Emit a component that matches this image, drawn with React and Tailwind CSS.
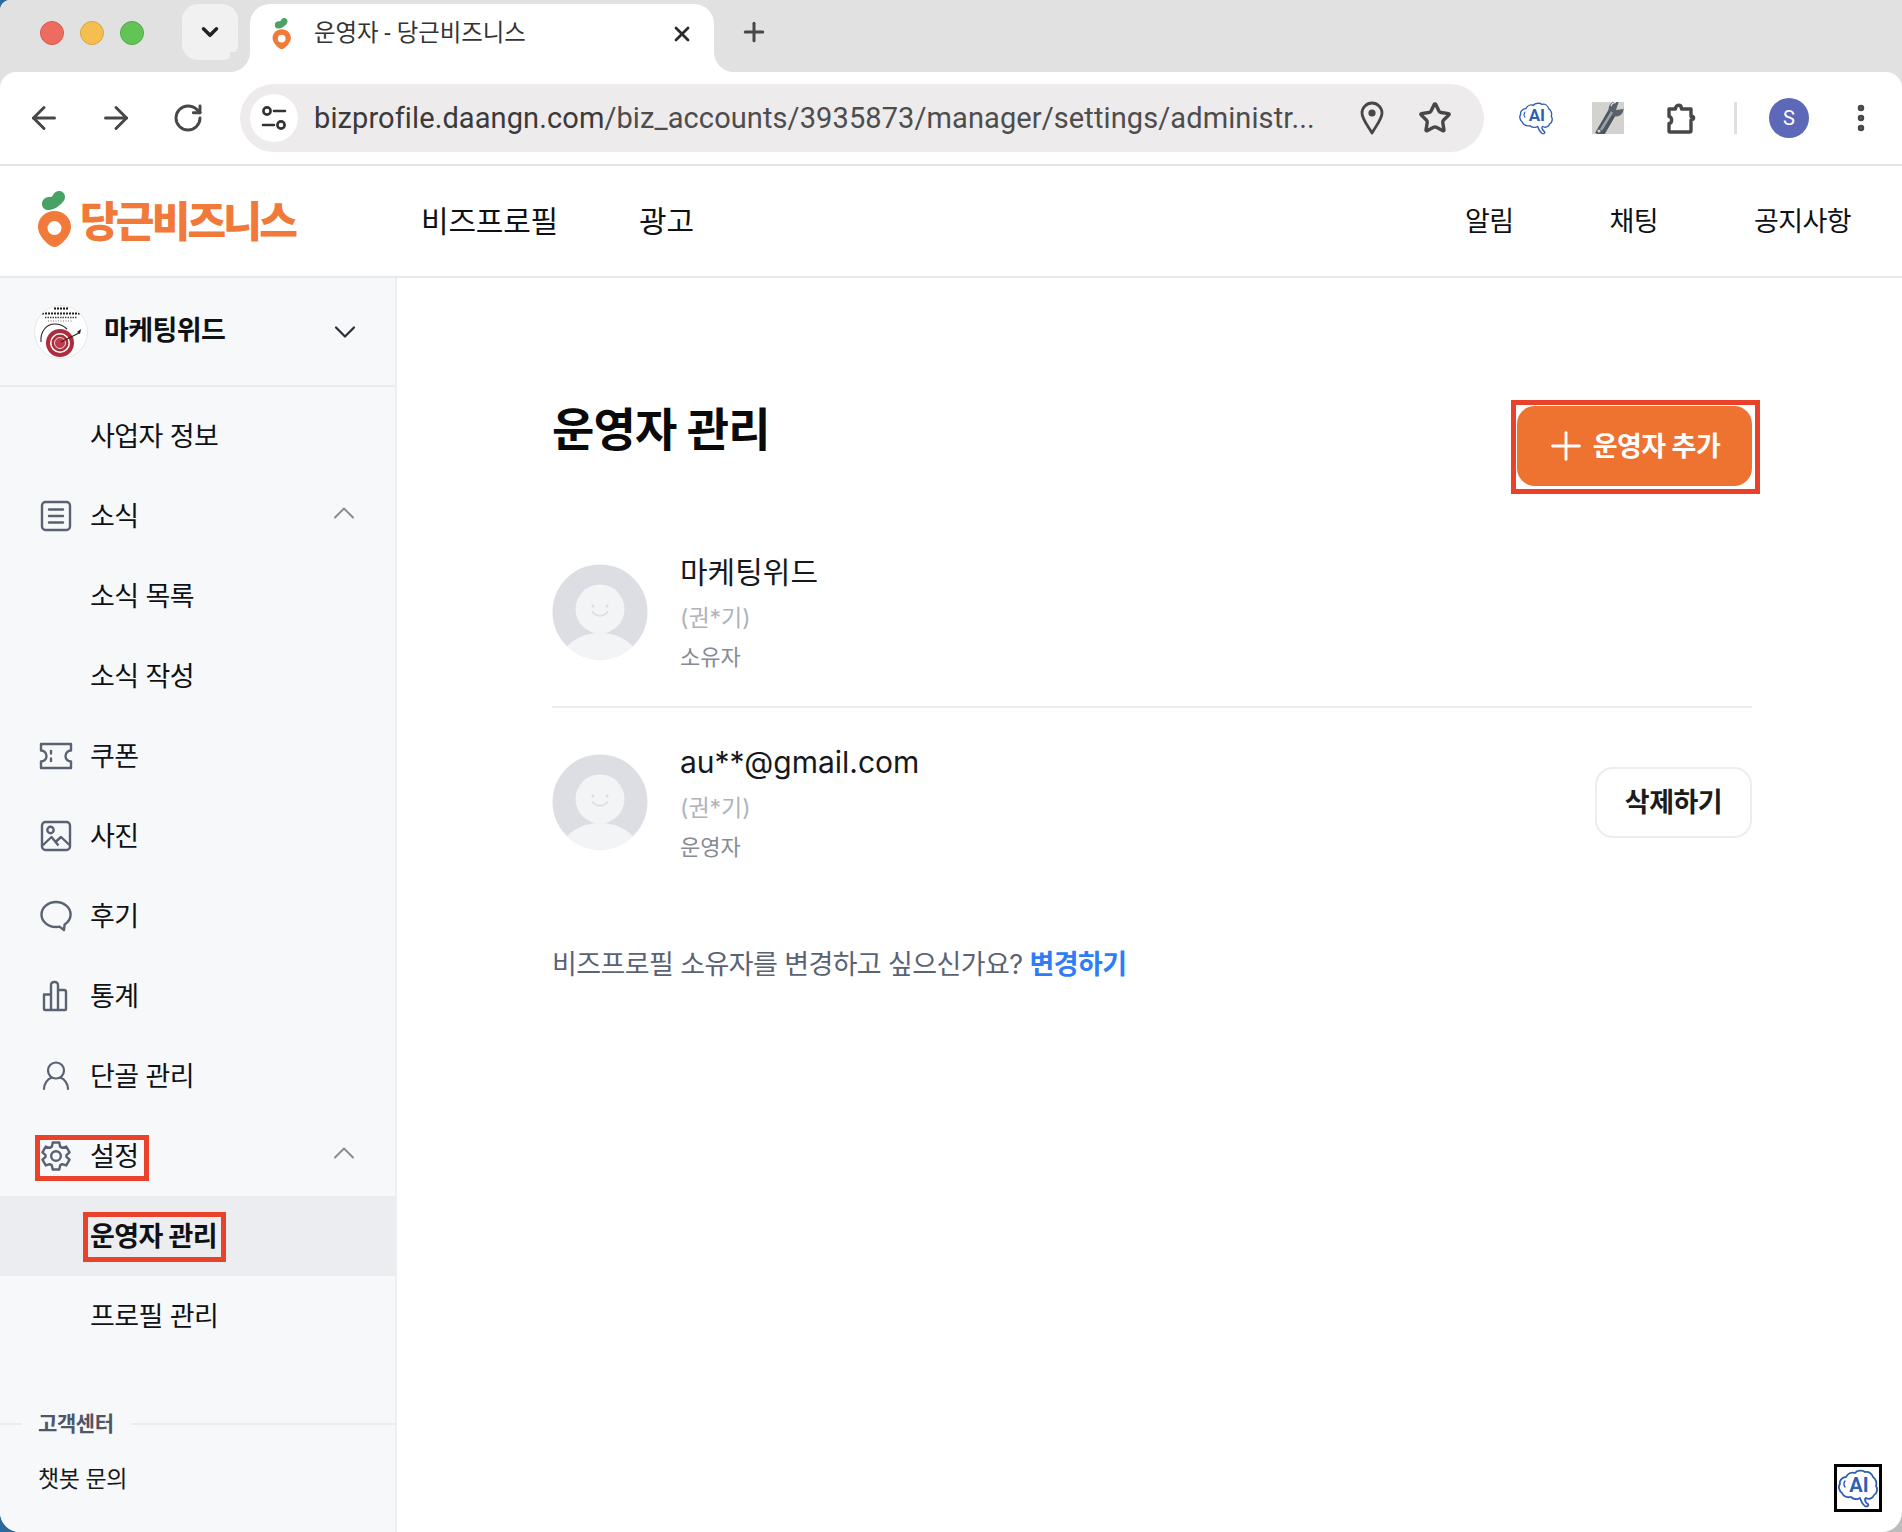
import React from "react";
import { ArrowLeft, ArrowRight, RotateCw, Star, X, Plus, ChevronDown, ChevronUp, EllipsisVertical } from "lucide-react";

const slate = "#596172";

function IconNews() {
  return (
    <svg width="32" height="32" viewBox="0 0 32 32" fill="none" stroke={slate} strokeWidth="2.4" strokeLinecap="round">
      <rect x="2" y="2" width="28" height="28" rx="3.5" />
      <path d="M9 9.5h14M9 16h14M9 22.5h14" />
    </svg>
  );
}

function IconCoupon() {
  return (
    <svg width="34" height="28" viewBox="0 0 34 28" fill="none" stroke={slate} strokeWidth="2.4">
      <path d="M2 2h30v6.5a5.5 5.5 0 0 0 0 11V26H2v-6.5a5.5 5.5 0 0 0 0-11V2Z" strokeLinejoin="round" />
      <path d="M12 9v2.5M12 16.5V19" strokeLinecap="round" />
    </svg>
  );
}

function IconPhoto() {
  return (
    <svg width="32" height="32" viewBox="0 0 32 32" fill="none" stroke={slate} strokeWidth="2.4" strokeLinejoin="round">
      <rect x="2" y="2" width="28" height="28" rx="3.5" />
      <circle cx="10.5" cy="10" r="3.2" />
      <path d="M2.5 25.5 11.5 17l7 8.5M16 21.5l5-4.5 8.5 8" />
    </svg>
  );
}

function IconChat() {
  return (
    <svg width="32" height="32" viewBox="0 0 32 32" fill="none" stroke={slate} strokeWidth="2.4" strokeLinejoin="round">
      <path d="M16 2C8 2 1.5 7.5 1.5 14.5S8 27 16 27c1.700 0 2.500-.1 3.500-.4L24 30l.6-5.500c3.600-2.400 6-6 6-10C30.600 7.500 24 2 16 2Z" />
    </svg>
  );
}

function IconBars() {
  return (
    <svg width="32" height="32" viewBox="0 0 32 32" fill="none" stroke={slate} strokeWidth="2.4" strokeLinejoin="round">
      <path d="M4 14.500h7V30H5a1 1 0 0 1-1-1V14.500ZM11 30V5a3 3 0 0 1 3-3h1a3 3 0 0 1 3 3v25H11ZM18 10h6a2 2 0 0 1 2 2v17a1 1 0 0 1-1 1h-7V10Z" />
    </svg>
  );
}

function IconPerson() {
  return (
    <svg width="32" height="32" viewBox="0 0 32 32" fill="none" stroke={slate} strokeWidth="2.200" strokeLinecap="round">
      <circle cx="16" cy="10.500" r="8" />
      <path d="M4 29c0-5.500 3.500-10 7.500-11.200M28 29c0-5.500-3.500-10-7.500-11.200" />
    </svg>
  );
}

function IconGear() {
  return (
    <svg width="34" height="34" viewBox="0 0 24 24" fill="none" stroke={slate} strokeWidth="1.700" strokeLinejoin="round">
      <path d="M9.670 2.500h4.660l.6 2.900 1.500.87 2.800-.93 2.330 4.030-2.200 1.970v1.320l2.200 1.970-2.330 4.030-2.800-.93-1.500.87-.6 2.900H9.670l-.6-2.900-1.500-.87-2.800.93-2.330-4.030 2.200-1.970v-1.320l-2.200-1.970 2.330-4.030 2.800.93 1.500-.87.6-2.900Z" />
      <circle cx="12" cy="12" r="3.400" />
    </svg>
  );
}

function Carrot({ size = 36 }) {
  return (
    <svg width={size} height={size * 1.56} viewBox="0 0 36 56" aria-hidden="true">
      <path d="M5 13c0-4 3-7 7-7 2 0 3 0 4-2 1.500-2.500 3.500-4 6-4 3.500 0 6 2.500 6 6 0 2-1 4-3 6-3 3-8 7-13 7-4 0-7-2-7-6Z" fill="#48a266" />
      <path fillRule="evenodd" d="M17.500 20C27 20 34 27 34 36c0 8-8 16-13 19-2 1.300-5 1.300-7 0C9 52 1 44 1 36c0-9 7-16 16.500-16Zm0 10a7 7 0 1 0 0 14 7 7 0 0 0 0-14Z" fill="#f1793a" />
    </svg>
  );
}

function BrainAI({ size = 36, stroke = 2 }) {
  return (
    <svg width={size} height={size} viewBox="0 0 40 40" fill="none" aria-hidden="true">
      <path
        d="M8 9C10 5 14 4 17 5C19 2 25 2 27 4C31 3 34 6 35 9C38 11 39 15 38 18C40 21 39 26 36 27C35 30 31 32 28 30L27 31C27 33 28 35 30 36C31 38 29 39 27 38C24 36 23 33 22 30C19 32 15 31 13 29C9 30 5 28 4 25C1 23 0 18 2 16C1 13 4 9 8 9Z"
        stroke="#2f5fb0"
        strokeWidth={stroke}
        strokeLinejoin="round"
      />
      <path d="M7 13c-1.500 2-1.500 4 0 6" stroke="#2f5fb0" strokeWidth={stroke * 0.8} strokeLinecap="round" />
      <text x="21" y="24" textAnchor="middle" fontSize="20" fontWeight="700" fill="#2f5fb0" fontFamily="Roboto, sans-serif">AI</text>
    </svg>
  );
}

function Wrench() {
  return (
    <div className="w-[32px] h-[32px] bg-[#d2d3ce] overflow-hidden">
      <svg width="32" height="32" viewBox="0 0 32 32" aria-hidden="true">
        <path d="M7 33 21 9" stroke="#4f5661" strokeWidth="9" />
        <circle cx="24" cy="7" r="7.500" fill="#5a616c" />
        <path d="M24 8 27 -1 33 2 31 7Z" fill="#d2d3ce" />
        <path d="M9 28 20 10" stroke="#9aa0a8" strokeWidth="2.500" />
        <path d="M19 4c1-2.500 3-3.500 5-3.500" stroke="#eeeeec" strokeWidth="1.200" fill="none" />
        <circle cx="7" cy="29" r="1.600" fill="#d2d3ce" />
      </svg>
    </div>
  );
}

function Puzzle() {
  return (
    <svg width="30" height="32" viewBox="0 0 30 32" fill="none" stroke="#474747" strokeWidth="3.400" strokeLinejoin="round" aria-hidden="true">
      <path d="M3 7h6.500c0-5 6-5 6 0H25v7.500c3-1.200 4 3 0 3.500v10.500c0 1-.5 1.500-1.500 1.500H4c-.7 0-1-.5-1-1.200V21.500c3.500 0 3.500-7 0-7V7Z" />
    </svg>
  );
}

function SiteAvatar() {
  return (
    <div className="w-[54px] h-[54px] rounded-full bg-white border border-[#e6e7ea] overflow-hidden shrink-0">
      <svg width="52" height="52" viewBox="0 0 52 52" aria-hidden="true">
        <path d="M19 2.500h14" stroke="#111" strokeWidth="2.200" strokeDasharray="2 1" />
        <path d="M7 7.500h38" stroke="#222" strokeWidth="2" strokeDasharray="2 1" />
        <path d="M10 11.500h32" stroke="#444" strokeWidth="1.500" strokeDasharray="1.500 1" />
        <path d="M13 15h24" stroke="#777" strokeWidth="1" strokeDasharray="1 1.500" />
        <path d="M6 36c-1-10 5-18 14-18 5 0 9 2 12 5" fill="none" stroke="#222" strokeWidth="1.100" />
        <circle cx="25" cy="37" r="14" fill="#ab2d3e" />
        <circle cx="25" cy="37" r="10" fill="#fff" />
        <circle cx="25" cy="37" r="8.500" fill="#ab2d3e" />
        <circle cx="25" cy="37" r="5.500" fill="#b83c4c" stroke="#fff" strokeWidth="0.800" />
        <path d="M26 36 44 27" stroke="#222" strokeWidth="1.200" />
        <path d="M42 26l4-3-1 5Z" fill="#222" />
      </svg>
    </div>
  );
}

function UserAvatar() {
  return (
    <svg width="96" height="96" viewBox="0 0 96 96" className="shrink-0" aria-hidden="true">
      <defs>
        <clipPath id="avatar-clip">
          <circle cx="48" cy="48" r="47.500" />
        </clipPath>
      </defs>
      <circle cx="48" cy="48" r="47.500" fill="#dcdee3" />
      <g clipPath="url(#avatar-clip)">
        <circle cx="48" cy="45" r="24.500" fill="#f3f4f6" />
        <ellipse cx="48" cy="100" rx="40" ry="31" fill="#f3f4f6" />
      </g>
      <circle cx="41" cy="42" r="1.500" fill="#dcdee3" />
      <circle cx="55" cy="42" r="1.500" fill="#dcdee3" />
      <path d="M40.500 48c3.500 5 11.500 5 15 0" fill="none" stroke="#dcdee3" strokeWidth="1.800" strokeLinecap="round" />
    </svg>
  );
}

function RedBox({ className }) {
  return <span className={`absolute border-[5px] border-[#e9412a] pointer-events-none ${className}`} />;
}

function SideRow({ icon, label, open, active, children }) {
  return (
    <div className={`relative h-[80px] flex items-center ${active ? "bg-[#ecedf1]" : ""}`}>
      <div className="w-[90px] shrink-0 flex justify-center pl-[22px]">{icon}</div>
      <span className={`pt-[2px] text-[27px] tracking-[-0.6px] text-[#0f1114] ${active ? "font-bold" : ""}`}>{label}</span>
      {open && <ChevronUp className="absolute left-[326px] top-[19px] text-[#868b94]" size={36} strokeWidth={1.300} />}
      {children}
    </div>
  );
}

function Member({ name, role }) {
  return (
    <div className="flex items-center">
      <UserAvatar />
      <div className="ml-[32px]">
        <div className="mt-[2px] text-[30px] leading-[38px] text-[#16181c]">{name}</div>
        <div className="text-[23px] leading-[34px] mt-[10px] text-[#b0b3ba]">(권*기)</div>
        <div className="text-[22px] leading-[32px] mt-[6px] text-[#868b94]">{role}</div>
      </div>
    </div>
  );
}

export default function App() {
  return (
    <div className="w-[1902px] h-[1532px] bg-[linear-gradient(90deg,#2a6a9e_0%,#2a6a9e_50%,#bcbcbc_100%)] font-['Roboto','Noto_Sans_CJK_KR',sans-serif]">
      <div className="relative w-full h-full rounded-tl-[10px] rounded-b-[20px] overflow-hidden bg-white flex flex-col">
        <div className="shrink-0 bg-[#e1e1e1]">
          {/* Browser tab strip */}
          <div className="h-[72px] flex items-start pt-[4px]">
            <div className="flex gap-[16px] pl-[40px] pr-[38px] pt-[17px]">
              <span className="w-[24px] h-[24px] rounded-full bg-[#ee6b60] border border-[#d55a50]" />
              <span className="w-[24px] h-[24px] rounded-full bg-[#f5bf4f] border border-[#d9a53f]" />
              <span className="w-[24px] h-[24px] rounded-full bg-[#61c454] border border-[#52a947]" />
            </div>
            <div className="w-[56px] h-[56px] rounded-[16px] bg-[#f1f1f1] flex items-center justify-center">
              <ChevronDown size={26} strokeWidth={3.200} className="text-[#222]" />
            </div>
            <div className="relative w-[464px] h-[68px] ml-[12px] bg-white rounded-t-[20px] flex items-center pl-[22px] pr-[20px] pb-[8px]">
              <Carrot size={20} />
              <span className="ml-[22px] text-[23.4px] text-[#333] flex-1">운영자 - 당근비즈니스</span>
              <X size={24} strokeWidth={2.800} className="text-[#2b2b2b]" />
              {/* concave flares where the tab meets the toolbar */}
              <span className="absolute -left-[20px] bottom-0 w-[20px] h-[20px] bg-white">
                <span className="block w-full h-full bg-[#e1e1e1] rounded-br-[20px]" />
              </span>
              <span className="absolute -right-[20px] bottom-0 w-[20px] h-[20px] bg-white">
                <span className="block w-full h-full bg-[#e1e1e1] rounded-bl-[20px]" />
              </span>
            </div>
            <Plus size={30} strokeWidth={2.400} className="ml-[25px] mt-[13px] text-[#474747]" />
          </div>

          {/* Browser toolbar */}
          <div className="h-[94px] bg-white rounded-t-[16px] border-b-2 border-[#e3e3e3] flex items-center">
            <div className="flex items-center pl-[26px]">
              <ArrowLeft size={36} strokeWidth={2} className="text-[#474747]" />
              <ArrowRight size={36} strokeWidth={2} className="ml-[36px] text-[#474747]" />
              <RotateCw size={32} strokeWidth={2.200} className="ml-[38px] text-[#474747]" />
            </div>
            <div className="ml-[36px] w-[1244px] h-[68px] rounded-full bg-[#edebec] flex items-center pl-[10px] pr-[32px]">
              <div className="w-[48px] h-[48px] rounded-full bg-white flex items-center justify-center shrink-0">
                <svg width="28" height="26" viewBox="0 0 28 26" fill="none" stroke="#333" strokeWidth="2.600" aria-hidden="true">
                  <circle cx="7" cy="6" r="3.600" />
                  <path d="M14 6h11M3 20h11" strokeLinecap="round" />
                  <circle cx="21" cy="20" r="3.600" />
                </svg>
              </div>
              <span className="ml-[16px] pt-[2px] text-[29px] tracking-[0.1px] text-[#3a3a3a] whitespace-nowrap flex-1">
                bizprofile.daangn.com<span className="text-[#4d4d4d]">/biz_accounts/3935873/manager/settings/administr...</span>
              </span>
              <svg width="24" height="34" viewBox="0 0 24 34" className="mr-[34px] shrink-0" fill="none" stroke="#474747" strokeWidth="2.800" aria-hidden="true">
                <path d="M12 32C8 25 2 18 2 12a10 10 0 0 1 20 0c0 6-6 13-10 20Z" strokeLinejoin="round" />
                <circle cx="12" cy="12" r="3.600" fill="#474747" stroke="none" />
              </svg>
              <Star size={34} strokeWidth={2.400} className="text-[#474747] shrink-0" />
            </div>
            <div className="ml-[35px] shrink-0"><BrainAI size={34} stroke={1.600} /></div>
            <div className="ml-[39px] shrink-0"><Wrench /></div>
            <div className="ml-[42px] shrink-0"><Puzzle /></div>
            <div className="ml-[38px] w-[3px] h-[32px] bg-[#dfdfdf] shrink-0" />
            <div className="ml-[32px] w-[40px] h-[40px] rounded-full bg-[#5d69b8] text-white text-[20px] flex items-center justify-center shrink-0">S</div>
            <EllipsisVertical size={34} strokeWidth={2.600} className="ml-[35px] text-[#474747] shrink-0" />
          </div>
        </div>

        {/* Site header */}
        <header className="h-[112px] shrink-0 border-b-2 border-[#e9eaed] flex items-center pr-[51px] font-['Inter','Noto_Sans_CJK_KR',sans-serif]">
          <div className="pl-[37px] -mt-[3px] shrink-0"><Carrot size={36} /></div>
          <span className="ml-[7px] w-[341px] shrink-0 text-[42px] font-black text-[#f1793a] tracking-[-2.800px] whitespace-nowrap">당근비즈니스</span>
          <nav className="flex gap-[81px] pt-[1px] text-[30px] tracking-[-0.2px] text-[#0f1114]">
            <span>비즈프로필</span>
            <span>광고</span>
          </nav>
          <div className="ml-auto flex gap-[96px] pt-[2px] text-[27px] tracking-[-0.600px] text-[#0f1114]">
            <span>알림</span>
            <span>채팅</span>
            <span>공지사항</span>
          </div>
        </header>

        <div className="flex-1 flex min-h-0 font-['Inter','Noto_Sans_CJK_KR',sans-serif]">
          {/* Sidebar */}
          <aside className="w-[397px] shrink-0 bg-[#f7f8fa] border-r-2 border-[#eeeff1] flex flex-col">
            <div className="h-[109px] shrink-0 border-b-2 border-[#eaebee] flex items-center pl-[34px] pr-[32px]">
              <SiteAvatar />
              <span className="ml-[16px] text-[27px] font-bold tracking-[-0.600px] text-[#0f1114]">마케팅위드</span>
              <ChevronDown size={36} strokeWidth={1.500} className="ml-auto text-[#2b2f36]" />
            </div>
            <div className="pt-[9px]">
              <SideRow label="사업자 정보" />
              <SideRow icon={<IconNews />} label="소식" open />
              <SideRow label="소식 목록" />
              <SideRow label="소식 작성" />
              <SideRow icon={<IconCoupon />} label="쿠폰" />
              <SideRow icon={<IconPhoto />} label="사진" />
              <SideRow icon={<IconChat />} label="후기" />
              <SideRow icon={<IconBars />} label="통계" />
              <SideRow icon={<IconPerson />} label="단골 관리" />
              <SideRow icon={<IconGear />} label="설정" open>
                <RedBox className="left-[35px] top-[19px] w-[114px] h-[46px]" />
              </SideRow>
              <SideRow label="운영자 관리" active>
                <RedBox className="left-[83px] top-[16px] w-[143px] h-[50px]" />
              </SideRow>
              <SideRow label="프로필 관리" />
            </div>
            <div className="mt-[52px] flex items-center">
              <span className="w-[22px] h-[2px] bg-[#eaebee]" />
              <span className="ml-[16px] text-[21px] font-bold tracking-[-0.400px] text-[#4f5666]">고객센터</span>
              <span className="ml-[17px] flex-1 h-[2px] bg-[#eaebee]" />
            </div>
            <div className="mt-[22px] pl-[38px] text-[23px] tracking-[-0.400px] text-[#16181c]">챗봇 문의</div>
          </aside>

          {/* Main content */}
          <main className="relative flex-1 pl-[155px] pr-[150px] pt-[86px]">
            <div className="flex items-start justify-between h-[187px]">
              <h1 className="text-[46px] leading-[64px] mt-[33px] font-bold tracking-[-0.8px] text-[#0a0a0a]">운영자 관리</h1>
              <div className="relative mt-[42px]">
                <button className="w-[235px] h-[80px] pr-[6px] rounded-[18px] bg-[#ee7230] text-white text-[27px] font-bold tracking-[-0.500px] flex items-center justify-center gap-[4px]">
                  <Plus size={46} strokeWidth={1.500} />
                  <span className="pt-[2px]">운영자 추가</span>
                </button>
                <RedBox className="-left-[6px] -top-[6px] -right-[8px] -bottom-[8px]" />
              </div>
            </div>

            <div className="h-[157px] border-b-2 border-[#ebecef]">
              <Member name="마케팅위드" role="소유자" />
            </div>

            <div className="pt-[33px] flex items-center justify-between">
              <Member name="au**@gmail.com" role="운영자" />
              <button className="w-[157px] h-[71px] pt-[2px] bg-white rounded-[18px] border-2 border-[#ecedef] text-[27px] font-bold tracking-[-0.500px] text-[#1a1c20]">
                삭제하기
              </button>
            </div>

            <p className="mt-[84px] text-[27px] leading-[36px] tracking-[-0.600px] text-[#5a6273]">
              비즈프로필 소유자를 변경하고 싶으신가요? <span className="font-bold text-[#2f7cf6]">변경하기</span>
            </p>

            <div className="absolute right-[20px] bottom-[20px] w-[48px] h-[48px] border-[3px] border-black bg-white flex items-center justify-center">
              <BrainAI size={40} stroke={1.800} />
            </div>
          </main>
        </div>
      </div>
    </div>
  );
}
